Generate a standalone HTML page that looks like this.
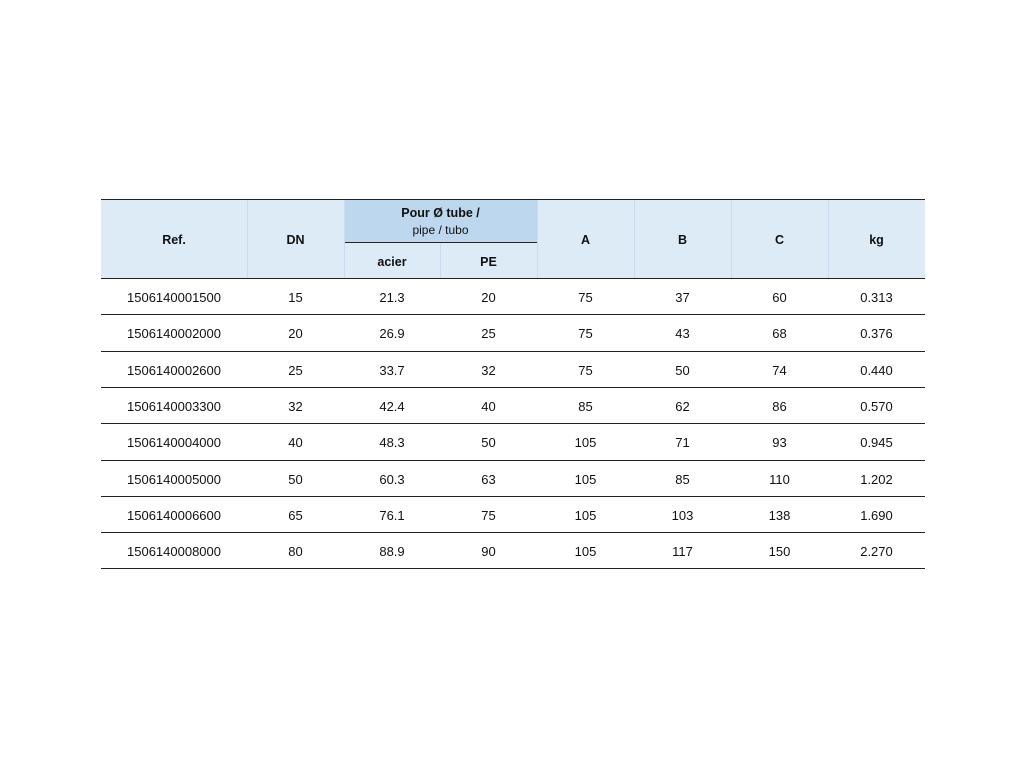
<!DOCTYPE html>
<html><head><style>
body{margin:0;width:1024px;height:768px;background:#fff;font-family:"Liberation Sans",sans-serif;color:#111;}
.c{position:absolute;text-align:center;font-size:13px;}
.h{font-weight:bold;font-size:12.5px}
.line{position:absolute;left:101px;width:824px;height:1px;background:#222;}
.vl{position:absolute;width:1px;background:#c9dcef;}
</style></head><body>
<div style="position:absolute;left:101px;top:199px;width:824px;height:79px;background:#ddebf7"></div>
<div style="position:absolute;left:344px;top:200px;width:193px;height:42px;background:#bdd7ee"></div>
<div style="position:absolute;left:344px;top:242px;width:193px;height:1px;background:#222"></div>
<div class="vl" style="left:247px;top:200px;height:78px"></div>
<div class="vl" style="left:344px;top:200px;height:78px"></div>
<div class="vl" style="left:440px;top:243px;height:35px"></div>
<div class="vl" style="left:537px;top:200px;height:78px"></div>
<div class="vl" style="left:634px;top:200px;height:78px"></div>
<div class="vl" style="left:731px;top:200px;height:78px"></div>
<div class="vl" style="left:828px;top:200px;height:78px"></div>
<div class="line" style="top:199px"></div>
<div class="line" style="top:278px"></div>
<div class="c h" style="left:101px;width:146px;top:233px">Ref.</div>
<div class="c h" style="left:247px;width:97px;top:233px">DN</div>
<div class="c h" style="left:344px;width:193px;top:206px">Pour Ø tube /</div>
<div class="c" style="left:344px;width:193px;top:223px;font-size:12px">pipe / tubo</div>
<div class="c h" style="left:344px;width:96px;top:255px">acier</div>
<div class="c h" style="left:440px;width:97px;top:255px">PE</div>
<div class="c h" style="left:537px;width:97px;top:233px">A</div>
<div class="c h" style="left:634px;width:97px;top:233px">B</div>
<div class="c h" style="left:731px;width:97px;top:233px">C</div>
<div class="c h" style="left:828px;width:97px;top:233px">kg</div>
<div id="rows"></div>
<script>
var d=[["1506140001500",15,"21.3",20,75,37,60,"0.313"],["1506140002000",20,"26.9",25,75,43,68,"0.376"],["1506140002600",25,"33.7",32,75,50,74,"0.440"],["1506140003300",32,"42.4",40,85,62,86,"0.570"],["1506140004000",40,"48.3",50,105,71,93,"0.945"],["1506140005000",50,"60.3",63,105,85,110,"1.202"],["1506140006600",65,"76.1",75,105,103,138,"1.690"],["1506140008000",80,"88.9",90,105,117,150,"2.270"]];
var L=[101,247,344,440,537,634,731,828,925],h="";
d.forEach(function(r,i){var t=278+i*36.3;
r.forEach(function(v,j){h+='<div class="c" style="left:'+L[j]+'px;width:'+(L[j+1]-L[j])+'px;top:'+(t+12)+'px">'+v+'</div>';});
h+='<div class="line" style="top:'+Math.round(t+36.3)+'px"></div>';});
document.getElementById("rows").innerHTML=h;
</script>
</body></html>
